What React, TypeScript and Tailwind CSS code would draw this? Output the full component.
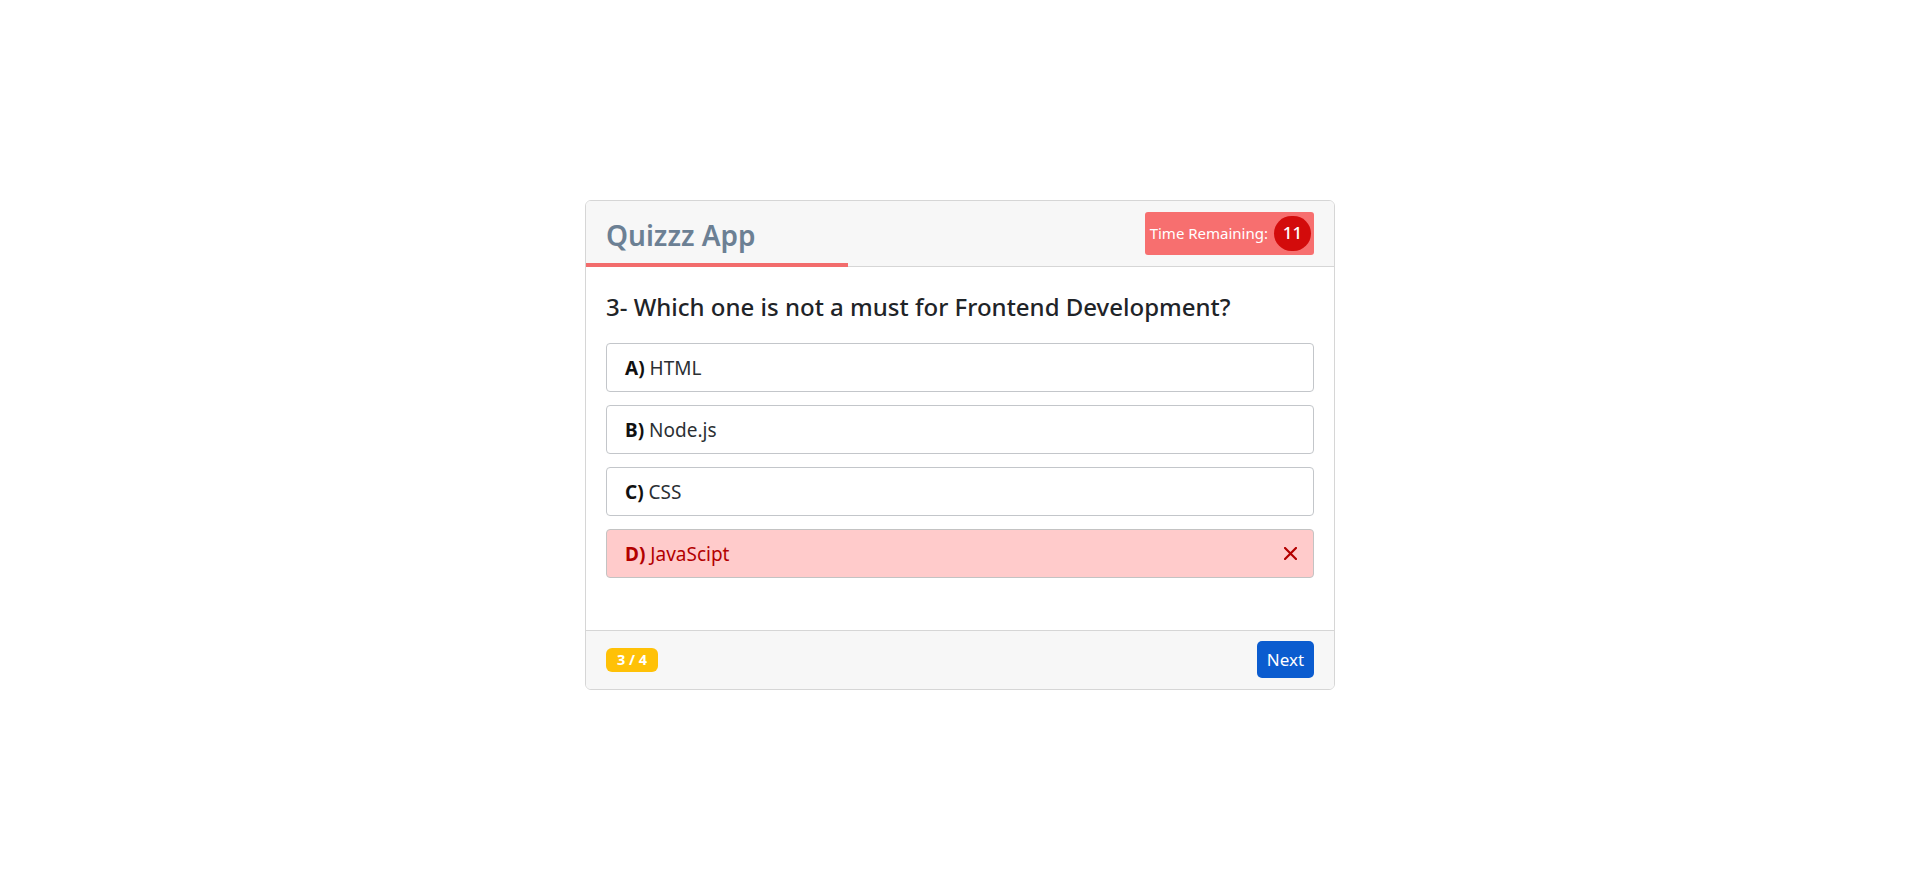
import React from "react";

const options = [
  { key: "A", text: "HTML", wrong: false },
  { key: "B", text: "Node.js", wrong: false },
  { key: "C", text: "CSS", wrong: false },
  { key: "D", text: "JavaScipt", wrong: true },
];

export default function App() {
  return (
    <div
      className="min-h-screen w-full bg-white flex items-center justify-center"
      style={{ fontFamily: '"Noto Sans", "Open Sans", sans-serif' }}
    >
      <div className="w-[750px] border border-[#d6d6d6] rounded-[6px] overflow-hidden bg-white">
        {/* Header */}
        <div className="relative h-[66px] bg-[#f7f7f7] border-b border-[#d6d6d6] flex items-center justify-between pl-[20px] pr-[20px]">
          <h3 className="text-[28px] font-semibold text-[#6c8094] leading-none mt-[4px]">Quizzz App</h3>
          <div className="h-[43px] w-[169px] bg-[#f76f6f] rounded-[3px] flex items-center justify-end pr-[3px] gap-[6px]">
            <span className="text-[15px] text-white whitespace-nowrap">Time Remaining:</span>
            <span className="w-[37px] h-[35px] shrink-0 rounded-full bg-[#d30b0b] text-white text-[17px] font-medium flex items-center justify-center">11</span>
          </div>
          <div className="absolute left-0 bottom-[-1px] h-[4px] w-[262px] bg-[#f26c6c]" />
        </div>
        {/* Body */}
        <div className="px-[20px] pt-[23px] pb-[52px]">
          <h4 className="text-[24px] font-medium text-[#1f2428] leading-[34px] mb-[19px] whitespace-nowrap">
            3- Which one is not a must for Frontend Development?
          </h4>
          <div className="flex flex-col gap-[13px]">
            {options.map((o) => (
              <div
                key={o.key}
                className={
                  o.wrong
                    ? "h-[49px] border border-[#c3c3c3] rounded-[4px] bg-[#ffcbcb] flex items-center justify-between pl-[18px] pr-[16px] pt-[2px] text-[#b30000] text-[19px]"
                    : "h-[49px] border border-[#c3c6ca] rounded-[4px] bg-white flex items-center pl-[18px] pt-[2px] text-[#2b2f33] text-[19px]"
                }
              >
                <span>
                  <b className={o.wrong ? "font-bold text-[#b30000]" : "font-bold text-[#111]"}>{o.key})</b> {o.text}
                </span>
                {o.wrong && (
                  <svg width="13" height="13" viewBox="0 0 13 13" className="text-[#b30000] -mt-[2px]">
                    <path d="M1 1 L12 12 M12 1 L1 12" stroke="currentColor" strokeWidth="2.2" strokeLinecap="square" />
                  </svg>
                )}
              </div>
            ))}
          </div>
        </div>
        {/* Footer */}
        <div className="h-[59px] bg-[#f7f7f7] border-t border-[#d6d6d6] flex items-center justify-between px-[20px]">
          <span className="h-[24px] px-[11px] rounded-[6px] bg-[#ffc107] text-white text-[14.5px] font-bold flex items-center">3 / 4</span>
          <button className="h-[37px] w-[57px] rounded-[5px] bg-[#0b5ccf] text-white text-[17px] flex items-center justify-center">Next</button>
        </div>
      </div>
    </div>
  );
}
